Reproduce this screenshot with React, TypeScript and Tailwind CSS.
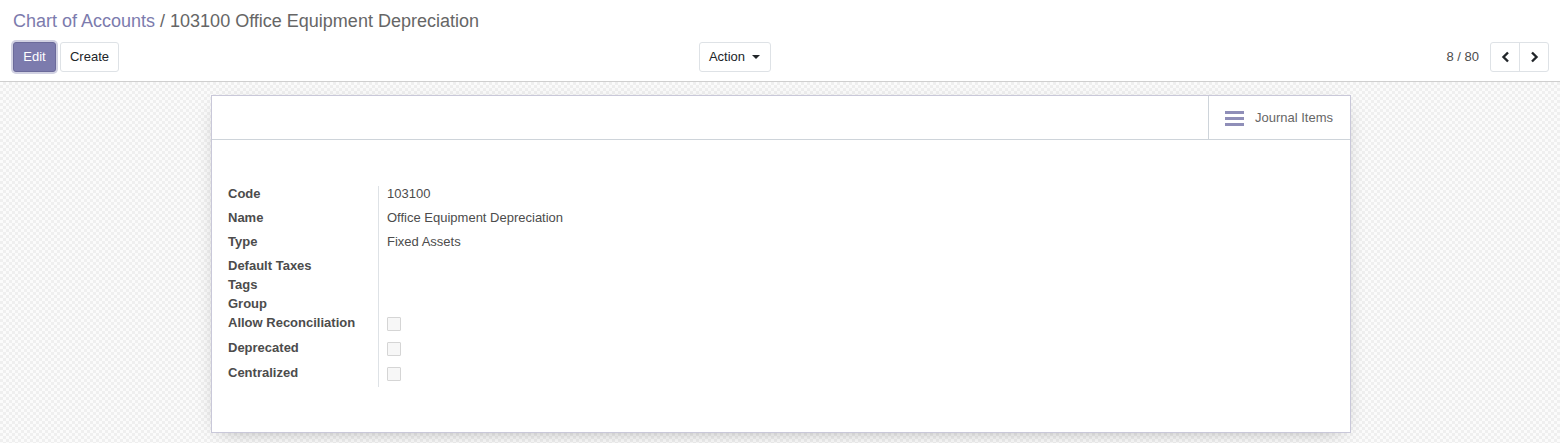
import React from 'react';

const fields: { label: string; value?: string; check?: boolean; h: string }[] = [
    { label: 'Code', value: '103100', h: 'h-[24px]' },
    { label: 'Name', value: 'Office Equipment Depreciation', h: 'h-[24px]' },
    { label: 'Type', value: 'Fixed Assets', h: 'h-[24px]' },
    { label: 'Default Taxes', h: 'h-[19px]' },
    { label: 'Tags', h: 'h-[19px]' },
    { label: 'Group', h: 'h-[19px]' },
    { label: 'Allow Reconciliation', check: true, h: 'h-[25px]' },
    { label: 'Deprecated', check: true, h: 'h-[25px]' },
    { label: 'Centralized', check: true, h: 'h-[22px]' },
];

const App: React.FC = () => {
    return (
        <div className="h-[443px] w-[1560px] overflow-hidden bg-white font-['Liberation_Sans',Arial,sans-serif] text-[13px] text-[#4c4c4c]">
            {/* Control panel */}
            <div className="h-[82px] border-b border-[#cfcfcf] pl-[13px] pr-[11px] pt-[9px]">
                <div className="h-[24px] text-[18px] leading-[24px] text-[#666]">
                    <span className="text-[#7c7bad]">Chart of Accounts</span>
                    <span> / 103100 Office Equipment Depreciation</span>
                </div>
                <div className="mt-[9px] flex items-center">
                    <div className="flex flex-1 items-center justify-between pr-[21px]">
                        <div className="flex gap-[4px]">
                            <button className="h-[30px] w-[43px] rounded-[3px] border border-[#6b6a9a] bg-[#7c7bad] text-[13px] text-white shadow-[0_0_0_2px_rgba(124,123,173,0.35)]">
                                Edit
                            </button>
                            <button className="h-[30px] w-[59px] rounded-[3px] border border-[#dee2e6] bg-white text-[13px] text-[#212529]">
                                Create
                            </button>
                        </div>
                        <button className="flex h-[30px] w-[72px] items-center justify-center gap-[7px] rounded-[3px] border border-[#dee2e6] bg-white text-[13px] text-[#212529]">
                            Action
                            <span className="mt-[-1px] h-0 w-0 border-x-[4px] border-t-[4px] border-x-transparent border-t-[#212529]" />
                        </button>
                    </div>
                    <div className="flex flex-1 items-center justify-end gap-[11px]">
                        <span className="text-[13px] text-[#4c4c4c]">8 / 80</span>
                        <div className="flex h-[30px] rounded-[3px] border border-[#dee2e6]">
                            <button className="flex w-[29px] items-center justify-center border-r border-[#dee2e6]">
                                <svg width="9" height="12" viewBox="0 0 9 12">
                                    <path d="M7 1.5 2.5 6 7 10.5" fill="none" stroke="#212529" strokeWidth="2.4" />
                                </svg>
                            </button>
                            <button className="flex w-[28px] items-center justify-center">
                                <svg width="9" height="12" viewBox="0 0 9 12">
                                    <path d="M2 1.5 6.5 6 2 10.5" fill="none" stroke="#212529" strokeWidth="2.4" />
                                </svg>
                            </button>
                        </div>
                    </div>
                </div>
            </div>

            {/* Sheet background */}
            <div className="h-[361px] bg-[image:repeating-conic-gradient(#efefef_0_25%,#fbfbfb_0_50%)] bg-[length:6px_6px] pl-[2px] pt-[13px]">
                <div className="mx-auto h-[338px] w-[1140px] border border-[#c9c8d9] bg-white shadow-[0_5px_20px_-10px_rgba(0,0,0,0.4)]">
                    {/* Button box */}
                    <div className="flex h-[44px] justify-end border-b border-[#ced4da]">
                        <button className="flex w-[142px] items-center gap-[11px] border-l border-[#ced4da] pl-[16px] text-[13px] text-[#666]">
                            <svg width="19" height="16" viewBox="0 0 19 16">
                                <rect x="0" y="1" width="19" height="3" fill="#8f8eb8" />
                                <rect x="0" y="7" width="19" height="3" fill="#8f8eb8" />
                                <rect x="0" y="13" width="19" height="3" fill="#8f8eb8" />
                            </svg>
                            Journal Items
                        </button>
                    </div>

                    {/* Fields */}
                    <div className="flex pl-[16px] pt-[46px]">
                        <div className="w-[151px] border-r border-[#dee2e6]">
                            {fields.map((f) => (
                                <div key={f.label} className={`${f.h} flex items-start font-bold leading-[16px] text-[#4c4c4c]`}>
                                    {f.label}
                                </div>
                            ))}
                        </div>
                        <div className="pl-[8px]">
                            {fields.map((f) => (
                                <div key={f.label} className={`${f.h} flex items-start leading-[16px] text-[#4c4c4c]`}>
                                    {f.value}
                                    {f.check && (
                                        <span className="mt-[2px] block h-[14px] w-[14px] rounded-[1px] border border-[#d5d5d5] bg-[#f7f7f7]" />
                                    )}
                                </div>
                            ))}
                        </div>
                    </div>
                </div>
            </div>
        </div>
    );
};

export default App;
